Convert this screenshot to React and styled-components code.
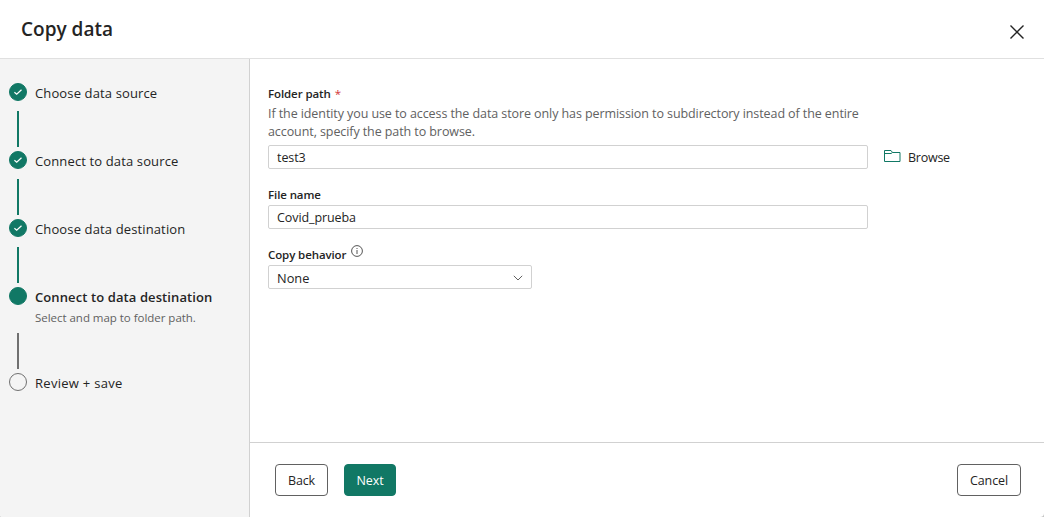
import React from 'react';
import styled, { createGlobalStyle } from 'styled-components';

const GlobalStyle = createGlobalStyle`
  *, *::before, *::after { box-sizing: border-box; }
  body { margin: 0; background: #c4c4c4; font-family: 'Open Sans', 'Noto Sans', sans-serif; color: #242424; }
  button, input { font-family: inherit; color: inherit; }
`;

const green = '#117865';

const Dialog = styled.div`
  width: 1044px;
  height: 517px;
  display: flex;
  flex-direction: column;
  background: #fff;
  border-radius: 0 0 4px 2px;
  overflow: hidden;
`;

const Header = styled.header`
  height: 59px;
  flex: none;
  display: flex;
  justify-content: space-between;
  border-bottom: 1px solid #e0e0e0;
  padding: 16px 19px 0 21px;
`;

const Title = styled.h1`
  margin: 0;
  font-size: 19px;
  line-height: 26px;
  font-weight: 600;
`;

const CloseButton = styled.button`
  border: 0;
  padding: 0;
  margin-top: 8px;
  width: 16px;
  height: 16px;
  background: none;
  svg { display: block; }
`;

const Body = styled.div`
  flex: 1;
  display: flex;
  min-height: 0;
`;

const Sidebar = styled.nav`
  width: 250px;
  flex: none;
  background: #f4f4f4;
  border-right: 1px solid #d1d1d1;
  padding: 24px 0 0 9px;
`;

const Step = styled.div`
  display: flex;
  gap: 8px;
  height: ${p => (p.$tall ? 86 : 68)}px;
`;

const Rail = styled.div`
  width: 18px;
  display: flex;
  flex-direction: column;
  align-items: center;
  justify-content: space-between;
  padding-bottom: 4px;
`;

const Marker = styled.span`
  width: 18px;
  height: 18px;
  flex: none;
  border-radius: 50%;
  background: ${p => (p.$pending ? 'transparent' : green)};
  border: 1px solid ${p => (p.$pending ? '#707070' : green)};
  display: flex;
  align-items: center;
  justify-content: center;
`;

const Connector = styled.span`
  width: 2px;
  height: 36px;
  background: ${p => (p.$pending ? '#707070' : green)};
`;

const StepText = styled.div`
  padding-top: 1px;
`;

const StepLabel = styled.div`
  font-size: 13px;
  line-height: 18px;
  letter-spacing: ${p => (p.$state === 'current' ? 0.1 : p.$state === 'pending' ? 0.28 : 0.13)}px;
  white-space: nowrap;
  font-weight: ${p => (p.$state === 'current' ? 600 : 400)};
`;

const StepHint = styled.div`
  font-size: 11.5px;
  line-height: 16px;
  margin-top: 4px;
  letter-spacing: -0.03px;
  color: #616161;
  white-space: nowrap;
`;

const Main = styled.main`
  flex: 1;
  display: flex;
  flex-direction: column;
`;

const Form = styled.form`
  flex: 1;
  padding: 27px 0 0 18px;
`;

const Field = styled.div`
  margin-bottom: ${p => p.$gap || 0}px;
`;

const Label = styled.label`
  display: flex;
  font-size: 11.5px;
  line-height: 16px;
  font-weight: 600;
  letter-spacing: -0.1px;
  margin-bottom: 2px;
  svg { margin: -2px 0 0 5px; }
`;

const Required = styled.span`
  color: #d13438;
  font-weight: 400;
  margin-left: 4px;
`;

const Description = styled.p`
  margin: 3px 0 4px;
  width: 600px;
  font-size: 12.5px;
  line-height: 18px;
  letter-spacing: -0.085px;
  color: #616161;
  white-space: nowrap;
`;

const InputRow = styled.div`
  display: flex;
  align-items: center;
`;

const TextInput = styled.input`
  display: block;
  width: 600px;
  height: 24px;
  border: 1px solid #d1d1d1;
  border-radius: 2px;
  padding: 0 8px;
  font-size: 12.5px;
  line-height: 18px;
  letter-spacing: -0.08px;
  outline: 0;
`;

const Select = styled.div`
  width: 264px;
  height: 24px;
  display: flex;
  align-items: center;
  justify-content: space-between;
  border: 1px solid #d1d1d1;
  border-radius: 2px;
  padding: 1px 8px 0;
  font-size: 12.8px;
`;

const BrowseButton = styled.button`
  display: flex;
  align-items: center;
  gap: 7px;
  margin-left: 16px;
  padding: 2px 0 0;
  border: 0;
  background: none;
  font-size: 12.5px;
  line-height: 18px;
  letter-spacing: -0.25px;
  svg { margin-bottom: 4px; }
`;

const Footer = styled.footer`
  height: 75px;
  flex: none;
  border-top: 1px solid #d1d1d1;
  display: flex;
  gap: 16px;
  padding: 21px 23px 0 25px;
`;

const Button = styled.button`
  width: ${p => p.$width}px;
  height: 32px;
  padding: 2px 0 0;
  border: 1px solid ${p => (p.$primary ? green : '#616161')};
  border-radius: 4px;
  background: ${p => (p.$primary ? green : '#fff')};
  color: ${p => (p.$primary ? '#fff' : '#242424')};
  font-size: 12.5px;
  line-height: 18px;
  letter-spacing: -0.1px;
  margin-left: ${p => (p.$end ? 'auto' : '0')};
`;

const steps = [
  { label: 'Choose data source', state: 'done' },
  { label: 'Connect to data source', state: 'done' },
  { label: 'Choose data destination', state: 'done' },
  { label: 'Connect to data destination', state: 'current', hint: 'Select and map to folder path.' },
  { label: 'Review + save', state: 'pending' },
];

const CheckIcon = () => (
  <svg width="10" height="8" viewBox="0 0 10 8" fill="none" stroke="#fff" strokeWidth="1.2">
    <path d="M1.4 4.3 3.7 6.3 8.5 1.7" />
  </svg>
);

const CloseIcon = () => (
  <svg width="16" height="16" viewBox="0 0 16 16" fill="none" stroke="#242424" strokeWidth="1.4">
    <path d="M1.5 1.5l13 13M14.5 1.5l-13 13" />
  </svg>
);

const FolderIcon = () => (
  <svg width="17" height="13" viewBox="0 0 17 13" fill="none" stroke={green}>
    <path d="M.5 11.5V.5h6.500l1.500 2h7.500v9zM.5 3.500h6.500l1.500-1" />
  </svg>
);

const InfoIcon = () => (
  <svg width="12" height="12" viewBox="0 0 12 12" fill="none" stroke="#424242" strokeWidth=".9">
    <circle cx="6" cy="6" r="5.4" />
    <path d="M6 5v4M6 3v1" />
  </svg>
);

const ChevronIcon = () => (
  <svg width="10" height="6" viewBox="0 0 10 6" fill="none" stroke="#616161">
    <path d="M.8.8 5 5 9.2.8" />
  </svg>
);

export default function App() {
  return (
    <>
      <GlobalStyle />
      <Dialog>
        <Header>
          <Title>Copy data</Title>
          <CloseButton type="button" aria-label="Close"><CloseIcon /></CloseButton>
        </Header>
        <Body>
          <Sidebar>
            {steps.map((step, i) => (
              <Step key={step.label} $tall={!!step.hint}>
                <Rail>
                  <Marker $pending={step.state === 'pending'}>
                    {step.state === 'done' && <CheckIcon />}
                  </Marker>
                  {i < steps.length - 1 && <Connector $pending={step.state !== 'done'} />}
                </Rail>
                <StepText>
                  <StepLabel $state={step.state}>{step.label}</StepLabel>
                  {step.hint && <StepHint>{step.hint}</StepHint>}
                </StepText>
              </Step>
            ))}
          </Sidebar>
          <Main>
            <Form>
              <Field $gap={18}>
                <Label>Folder path<Required>*</Required></Label>
                <Description>
                  If the identity you use to access the data store only has permission to subdirectory instead of the entire
                  <br />
                  account, specify the path to browse.
                </Description>
                <InputRow>
                  <TextInput defaultValue="test3" />
                  <BrowseButton type="button"><FolderIcon />Browse</BrowseButton>
                </InputRow>
              </Field>
              <Field $gap={18}>
                <Label>File name</Label>
                <TextInput defaultValue="Covid_prueba" />
              </Field>
              <Field>
                <Label>Copy behavior<InfoIcon /></Label>
                <Select>None<ChevronIcon /></Select>
              </Field>
            </Form>
            <Footer>
              <Button type="button" $width={53}>Back</Button>
              <Button type="button" $width={52} $primary>Next</Button>
              <Button type="button" $width={64} $end>Cancel</Button>
            </Footer>
          </Main>
        </Body>
      </Dialog>
    </>
  );
}
